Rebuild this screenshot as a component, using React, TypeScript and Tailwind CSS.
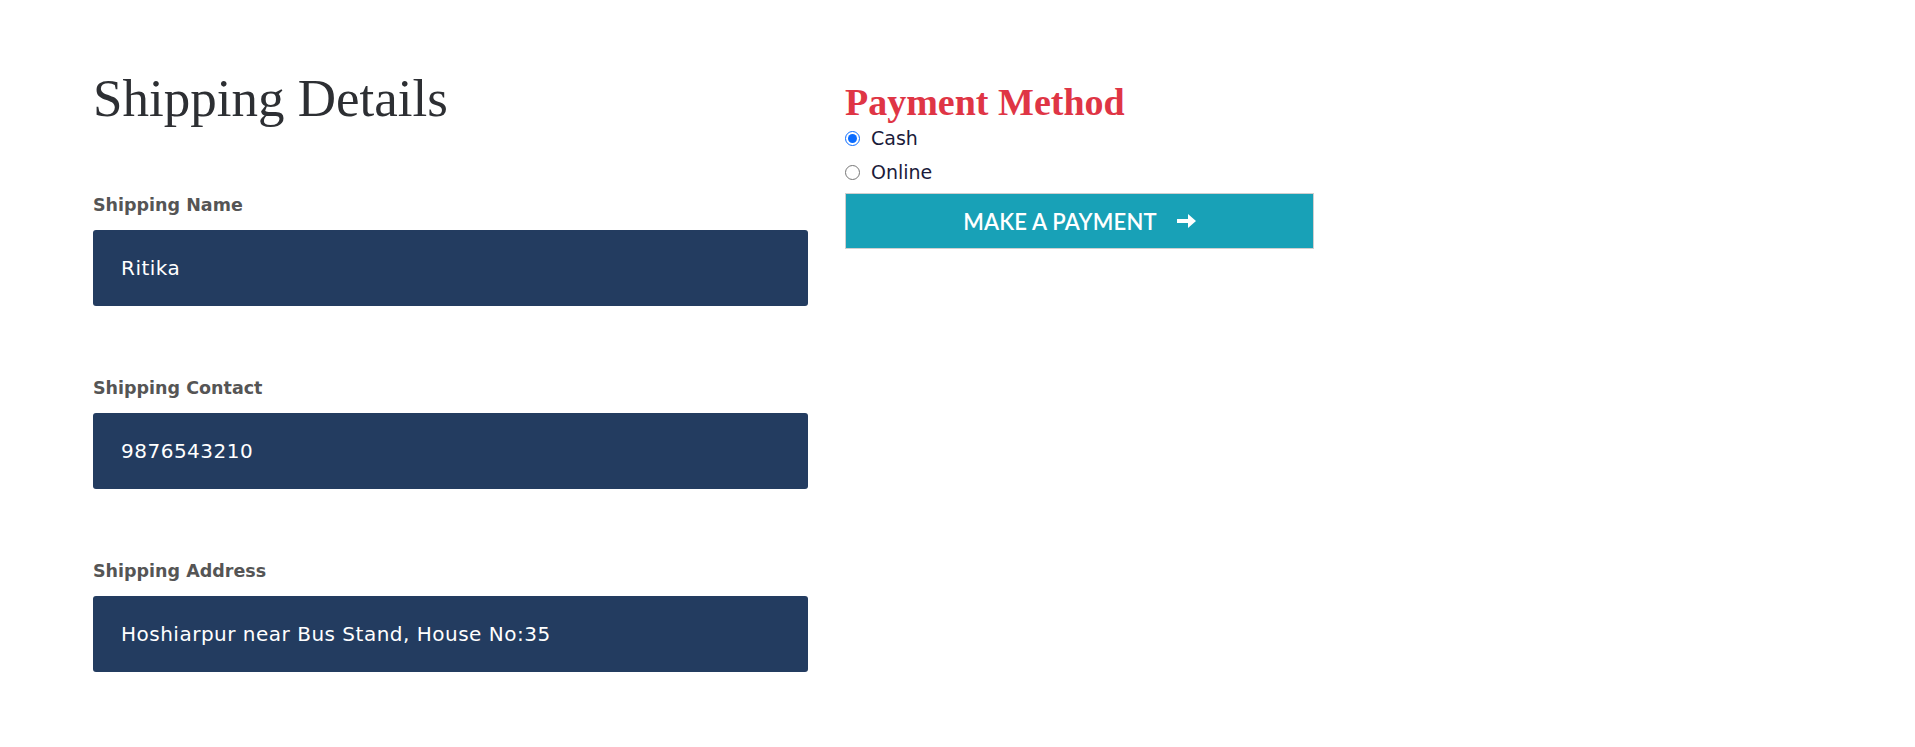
import React, { useState } from "react";

const fields = [
  { label: "Shipping Name", value: "Ritika" },
  { label: "Shipping Contact", value: "9876543210" },
  { label: "Shipping Address", value: "Hoshiarpur near Bus Stand, House No:35" },
];

const App: React.FC = () => {
  const [method, setMethod] = useState("cash");

  return (
    <div className="min-h-[747px] bg-white font-['Open_Sans',sans-serif]">
      <div className="flex pl-[93px] pt-[68px]">
        <div className="w-[715px]">
          <h1 className="font-['Liberation_Serif',serif] text-[53px] leading-[60px] text-[#2d2f33]">
            Shipping Details
          </h1>
          <div className="mt-[65px]">
            {fields.map((f) => (
              <div key={f.label} className="mb-[70px]">
                <label className="block font-['DejaVu_Sans',sans-serif] text-[17.5px] leading-[24px] font-bold text-[#555555]">
                  {f.label}
                </label>
                <input
                  readOnly
                  value={f.value}
                  className="mt-[13px] block h-[76px] w-full rounded-[3px] bg-[#233c60] px-[28px] font-['DejaVu_Sans',sans-serif] text-[20px] tracking-[0.5px] text-white outline-none"
                />
              </div>
            ))}
          </div>
        </div>

        <div className="ml-[37px] w-[469px] pt-[15px]">
          <h2 className="font-['Liberation_Serif',serif] text-[38px] leading-[38px] font-bold text-[#df3545]">
            Payment Method
          </h2>
          <label className="flex h-[34px] items-center gap-[11px] font-['DejaVu_Sans',sans-serif] text-[19px] text-[#1b1b3a]">
            <input
              type="radio"
              name="pay"
              checked={method === "cash"}
              onChange={() => setMethod("cash")}
              className="ml-0 h-[15px] w-[15px] accent-[#0a6cff]"
            />
            Cash
          </label>
          <label className="flex h-[34px] items-center gap-[11px] font-['DejaVu_Sans',sans-serif] text-[19px] text-[#1b1b3a]">
            <input
              type="radio"
              name="pay"
              checked={method === "online"}
              onChange={() => setMethod("online")}
              className="ml-0 h-[15px] w-[15px] accent-[#0a6cff]"
            />
            Online
          </label>
          <button className="mt-[4px] flex h-[56px] w-full items-center justify-center gap-[20px] border border-[#cfcfcf] bg-[#18a1b7] font-['Lato',sans-serif] text-[22px] font-semibold tracking-[0.2px] text-white">
            MAKE A PAYMENT
            <svg width="19" height="14" viewBox="0 0 19 14" fill="white">
              <path d="M0 5h11V0l8 7-8 7V9H0z" />
            </svg>
          </button>
        </div>
      </div>
    </div>
  );
};

export default App;
